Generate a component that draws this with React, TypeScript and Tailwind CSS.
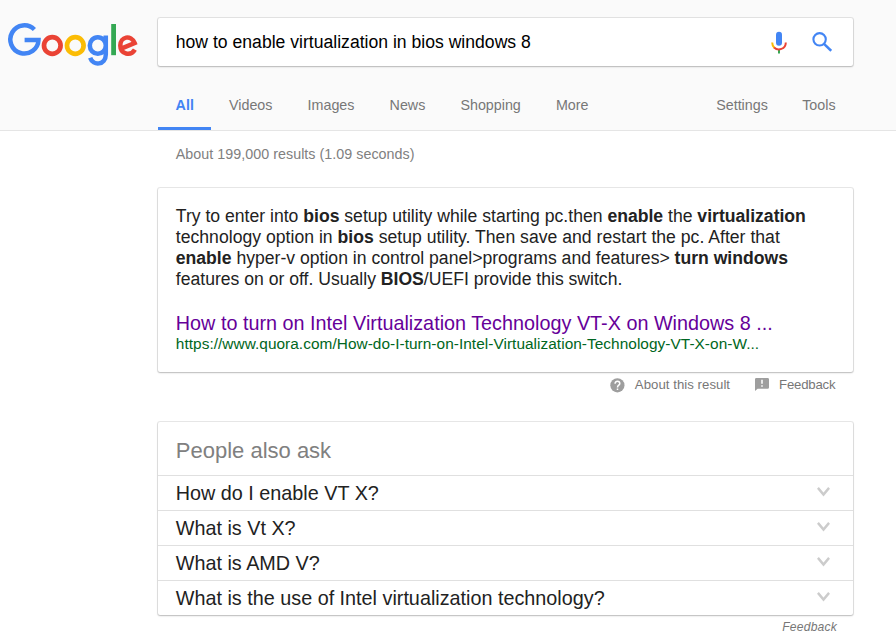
import React from "react";

const tabs = ["Videos", "Images", "News", "Shopping", "More"];
const questions = [
  "How do I enable VT X?",
  "What is Vt X?",
  "What is AMD V?",
  "What is the use of Intel virtualization technology?",
];

const card =
  "bg-white rounded-[2px] shadow-[0_1px_2px_rgba(0,0,0,0.2),0_0_0_1px_rgba(0,0,0,0.09)]";

function Logo() {
  return (
    <svg width="132" height="46" viewBox="0 0 132 46" fill="none" strokeWidth="4.7">
      <path d="M27.4 7.5A14.1 14.1 0 1 0 31.5 18H17.6" stroke="#4285f4" strokeWidth="4.5" />
      <circle cx="45.3" cy="23.5" r="8.3" stroke="#ea4335" />
      <circle cx="68.3" cy="23.5" r="8.3" stroke="#fbbc05" />
      <path
        d="M98.8 13.6V32.4C98.8 43.2 86 44.4 83.2 35.8M98.8 23.5A8 8.3 0 1 1 82.8 23.5A8 8.3 0 1 1 98.8 23.5"
        stroke="#4285f4"
        strokeWidth="4.5"
      />
      <path d="M106.6 2V33.2" stroke="#34a853" strokeWidth="4.8" />
      <path d="M113.6 26.8L127.6 21C123.9 12.4 113.3 14.4 113.3 23.6C113.3 32.6 123.9 34.4 127.9 27.6" stroke="#ea4335" strokeWidth="4.5" />
    </svg>
  );
}

function Mic() {
  return (
    <svg width="16" height="23" viewBox="0 0 16 23" fill="none">
      <rect x="5" y="0.8" width="6" height="14" rx="3" fill="#4285f4" />
      <path d="M8 18.5V22.5" stroke="#34a853" strokeWidth="2" />
      <path d="M1.2 11.5C1.2 13.7 2 15.4 3.3 16.7" stroke="#fbbc05" strokeWidth="2" />
      <path d="M3.1 16.5C7 20.1 14.8 18.3 14.8 11.5" stroke="#ea4335" strokeWidth="2" />
    </svg>
  );
}

export default function App() {
  return (
    <div className="h-[641px] w-[896px] overflow-hidden bg-white font-['Liberation_Sans',Arial,sans-serif] text-[#222]">
      <header className="flex h-[131px] border-b border-[#e5e5e5] bg-[#fafafa]">
        <div className="w-[158px] shrink-0 pt-[22px] pl-[7px]">
          <Logo />
        </div>
        <div className="flex w-[695px] flex-col">
          <div className={`mt-[18px] flex h-[48px] items-center pl-[17.8px] text-[17.6px] text-black ${card}`}>
            <span className="flex-1">how to enable virtualization in bios windows 8</span>
            <Mic />
            <svg className="mr-[21px] ml-[25px]" width="20" height="20" viewBox="0 0 20 20" fill="none" stroke="#4285f4">
              <circle cx="7.6" cy="7.3" r="6.2" strokeWidth="2.1" />
              <path d="M12 11.8L19.2 18.8" strokeWidth="2.5" />
            </svg>
          </div>
          <nav className="mt-[14px] flex h-[50px] text-[14.3px] leading-[50px] text-[#777]">
            <span className="border-b-[3px] border-[#4285f4] px-[17.6px] font-bold text-[#4285f4]">All</span>
            {tabs.map((t) => (
              <span key={t} className="px-[17.56px]">{t}</span>
            ))}
            <span className="ml-auto px-[17.2px]">Settings</span>
            <span className="pr-[17.4px] pl-[17.2px]">Tools</span>
          </nav>
        </div>
      </header>

      <main className="ml-[158px] w-[695px]">
        <p className="h-[57px] pt-[15px] pl-[17.8px] text-[14.3px] leading-[17px] tracking-[0.03px] text-[#808080]">
          About 199,000 results (1.09 seconds)
        </p>
        <section className={`h-[184px] px-[17.8px] pt-[18px] ${card}`}>
          <p className="text-[17.6px] leading-[21px] whitespace-nowrap">
            Try to enter into <b>bios</b> setup utility while starting pc.then <b>enable</b> the <b>virtualization</b>
            <br />
            <span className="tracking-[0.015px]">
              technology option in <b>bios</b> setup utility. Then save and restart the pc. After that
            </span>
            <br />
            <b>enable</b> hyper-v option in control panel&gt;programs and features&gt; <b>turn windows</b>
            <br />
            features on or off. Usually <b>BIOS</b>/UEFI provide this switch.
          </p>
          <h3 className="mt-[21px] text-[19.8px] leading-[24px] tracking-[0.01px] whitespace-nowrap text-[#609]">
            How to turn on Intel Virtualization Technology VT-X on Windows 8 ...
          </h3>
          <p className="text-[15.4px] leading-[18px] tracking-[0.044px] whitespace-nowrap text-[#006621]">
            https://www.quora.com/How-do-I-turn-on-Intel-Virtualization-Technology-VT-X-on-W...
          </p>
        </section>
        <div className="flex h-[50px] items-start justify-end pt-[5px] pr-[17.6px] text-[13.2px] leading-[15px] text-[#777]">
          <svg className="mt-[1px] mr-[10px]" width="15" height="15" viewBox="0 0 15 15" fill="none">
            <circle cx="7.4" cy="7.3" r="7.1" fill="#9e9e9e" />
            <path d="M5.1 5.7C5.1 2.3 9.8 2.6 9.8 5.5C9.8 7.2 7.5 7.2 7.5 9.4" stroke="#fff" strokeWidth="1.5" />
            <path d="M7.5 10.5V12" stroke="#fff" strokeWidth="1.5" />
          </svg>
          <span className="tracking-[0.04px]">About this result</span>
          <svg className="mt-[1px] mr-[10px] ml-[25px]" width="14" height="14" viewBox="0 0 14 14">
            <path d="M1.4 0H12.6Q14 0 14 1.3V9.4Q14 10.7 12.6 10.7H2.6L0 13V1.3Q0 0 1.4 0Z" fill="#9e9e9e" />
            <path d="M7 1.8V5.8M7 7.2V8.8" stroke="#fff" strokeWidth="1.5" />
          </svg>
          <span className="tracking-[-0.2px]">Feedback</span>
        </div>
        <section className={card}>
          <h2 className="h-[53px] pt-[16px] pl-[17.8px] text-[22px] leading-[26px] text-[#808080]">People also ask</h2>
          {questions.map((q) => (
            <div key={q} className="flex h-[35px] items-center justify-between border-t border-[#e0e0e0] pr-[23px] pl-[17.8px] text-[19.8px]">
              <span className="pt-[2px]">{q}</span>
              <svg className="mb-[2px]" width="13" height="10" viewBox="0 0 13 10" fill="none" stroke="#ccc" strokeWidth="2.5">
                <path d="M0.9 0.9L6.5 7.5L12.1 0.9" />
              </svg>
            </div>
          ))}
        </section>
        <p className="mt-[5px] pr-[16px] text-right text-[12.1px] leading-[15px] tracking-[0.2px] text-[#777] italic">Feedback</p>
      </main>
    </div>
  );
}
